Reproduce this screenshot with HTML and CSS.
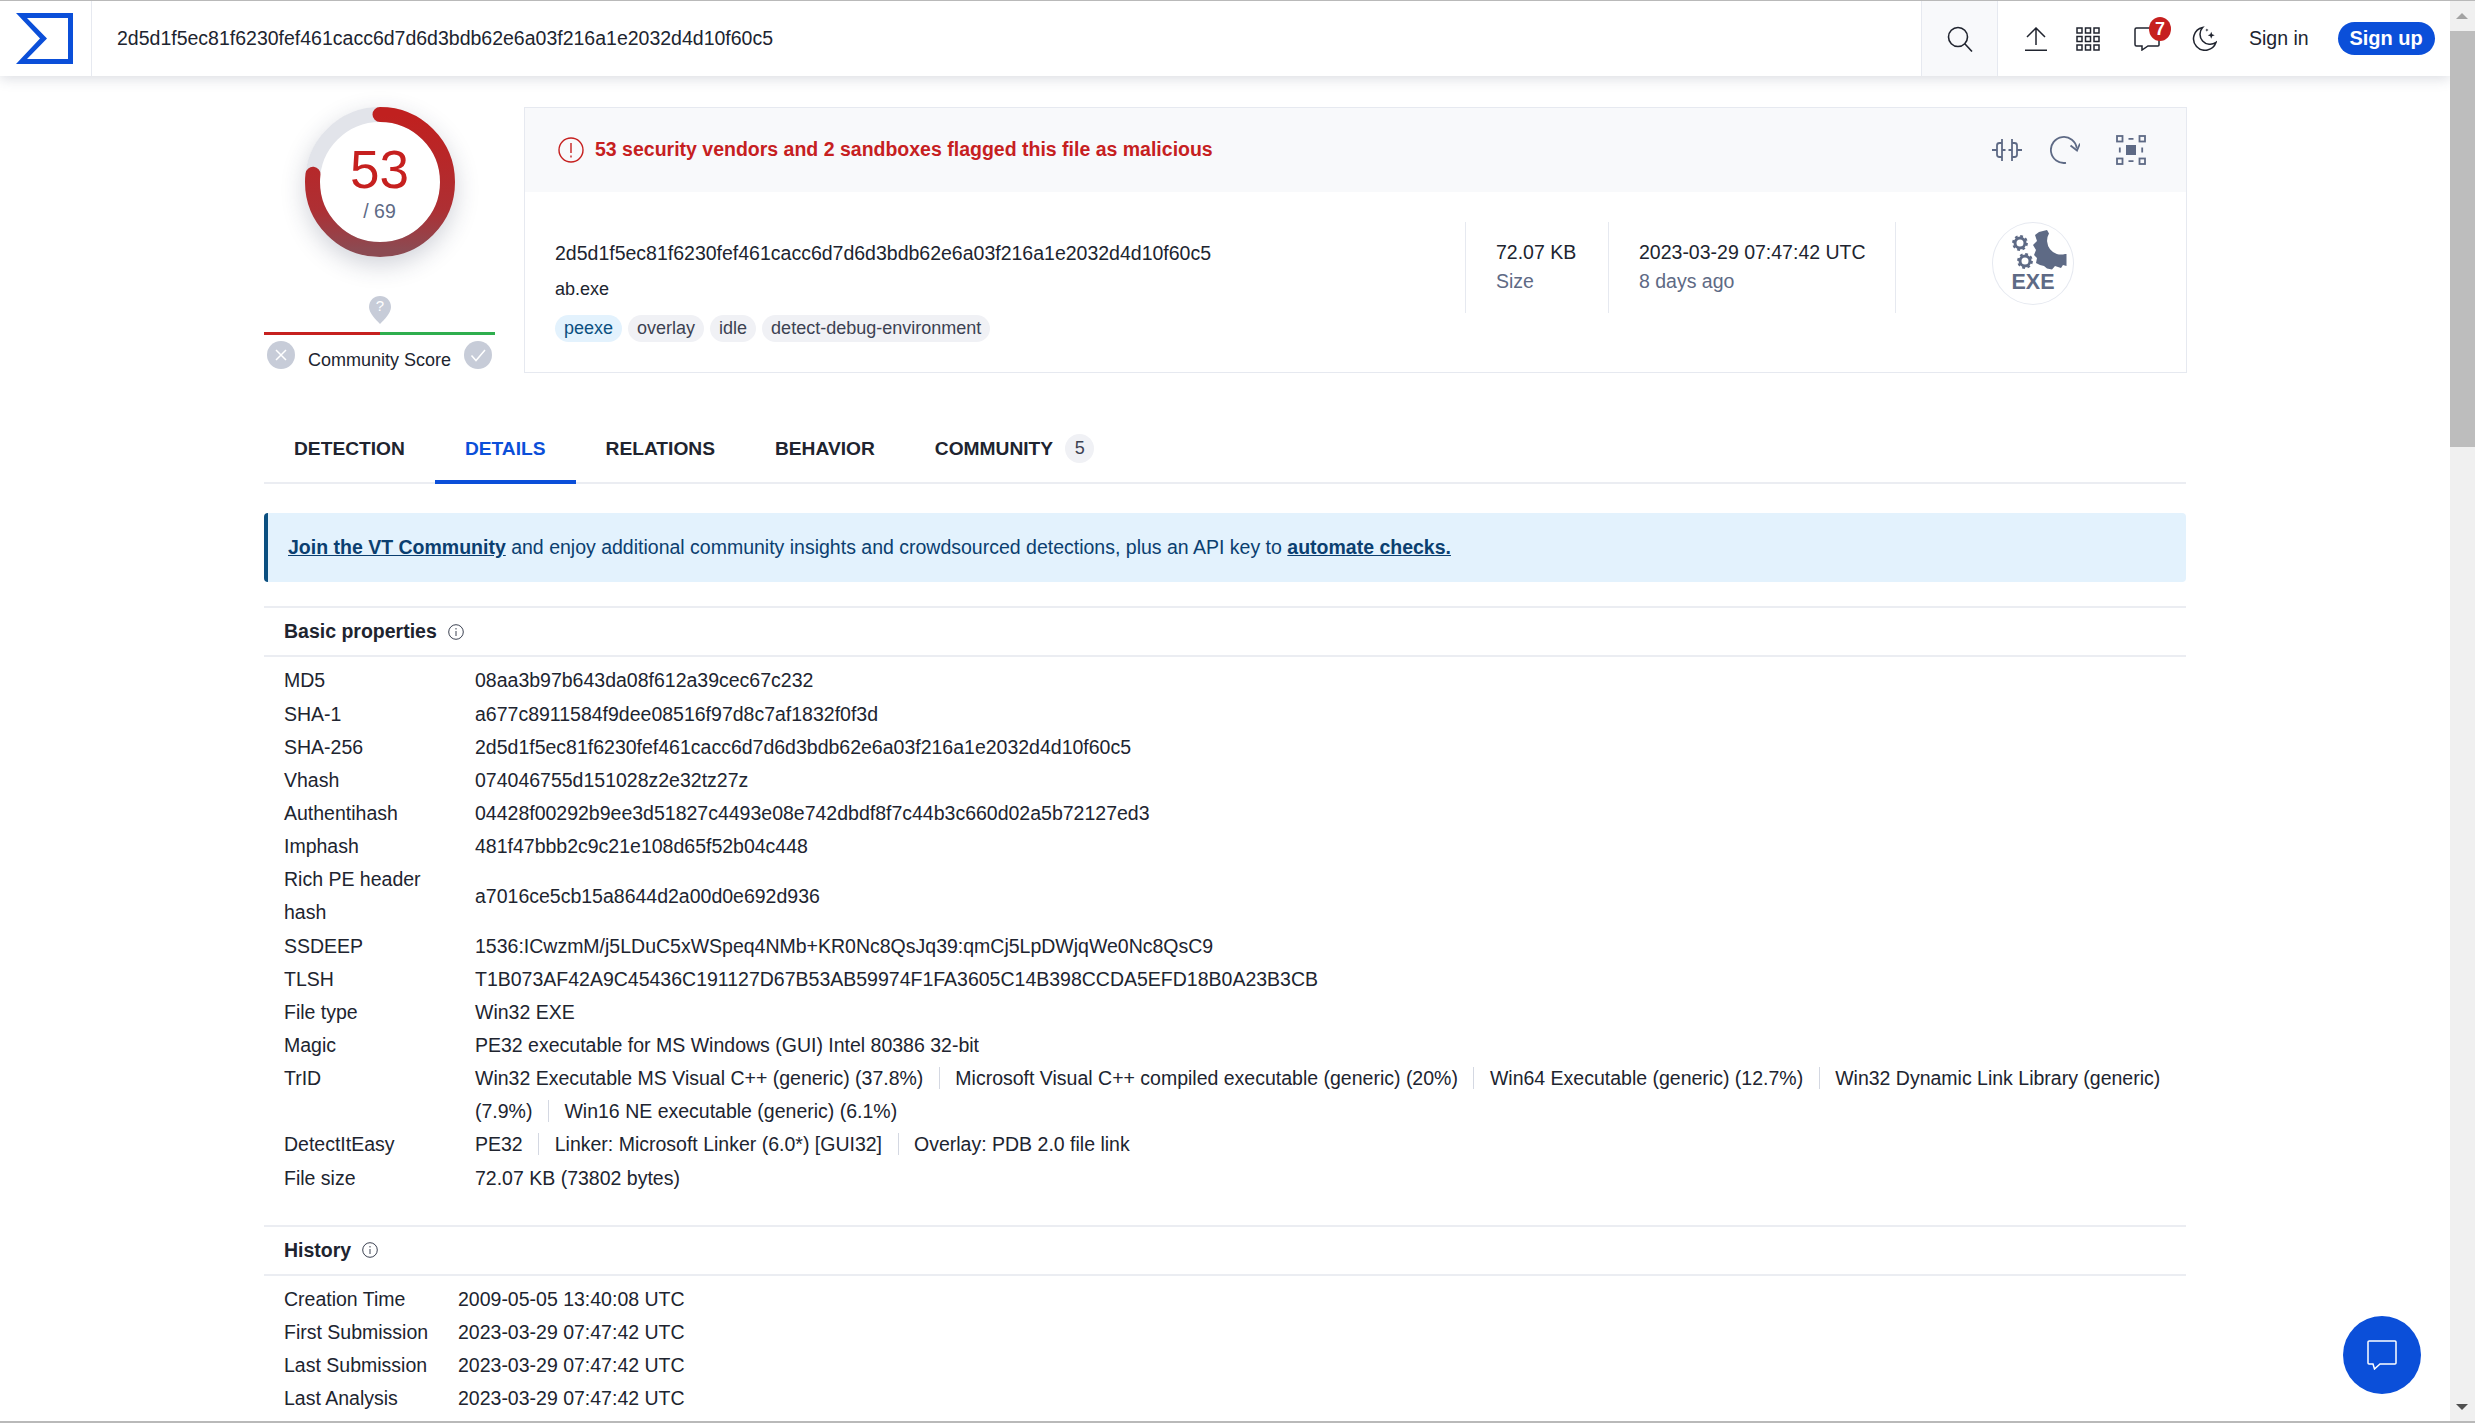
FILE: index.html
```html
<!DOCTYPE html>
<html lang="en">
<head>
<meta charset="utf-8">
<title>VirusTotal - File - 2d5d1f5ec81f6230fef461cacc6d7d6d3bdb62e6a03f216a1e2032d4d10f60c5</title>
<link rel="stylesheet" href="styles.css">
</head>
<body>
<div class="window">
  <div class="viewport">
    <header class="topbar">
      <a class="logo-cell">
        <svg class="logo" viewBox="0 0 57 51"><path fill="#0b4fd9" fill-rule="evenodd" d="M0 0H57V51H0L24 25.5ZM11 5 31 25.5 11 46H52V5Z"/></svg>
      </a>
      <div class="search-text">2d5d1f5ec81f6230fef461cacc6d7d6d3bdb62e6a03f216a1e2032d4d10f60c5</div>
      <div class="search-btn">
        <svg class="ico-26" viewBox="0 0 26 26" fill="none" stroke="#20242f" stroke-width="1.6"><circle cx="11" cy="11" r="9.5"/><path d="M17.8 17.8 25 25.5"/></svg>
      </div>
      <div class="top-actions">
        <svg class="ico-upload" viewBox="0 0 22 24" fill="none" stroke="#20242f" stroke-width="1.5"><path d="M11 18V1M2 10 11 1l9 9M0 23.200h22"/></svg>
        <svg class="ico-grid" viewBox="0 0 24 24" fill="none" stroke="#20242f" stroke-width="1.5"><rect x="1" y="1" width="5" height="5"/><rect x="9.500" y="1" width="5" height="5"/><rect x="18" y="1" width="5" height="5"/><rect x="1" y="9.500" width="5" height="5"/><rect x="9.500" y="9.500" width="5" height="5"/><rect x="18" y="9.500" width="5" height="5"/><rect x="1" y="18" width="5" height="5"/><rect x="9.500" y="18" width="5" height="5"/><rect x="18" y="18" width="5" height="5"/></svg>
        <div class="notify">
          <svg class="ico-chat" viewBox="0 0 26 24" fill="none" stroke="#20242f" stroke-width="1.5"><path d="M2.500 1H23.500Q25 1 25 2.500V18Q25 19 24 19H14L8 23V19H2.500Q1 19 1 17.500V2.500Q1 1 2.500 1Z"/></svg>
          <span class="badge">7</span>
        </div>
        <svg class="ico-moon" viewBox="0 0 26 26" fill="none" stroke="#20242f" stroke-width="1.6"><path d="M11 1.500A12 12 0 1 0 25 17 10.500 10.500 0 0 1 11 1.500Z"/><path fill="#20242f" stroke="none" d="M20 6l1 2.600 2.600 1-2.600 1-1 2.600-1-2.600-2.600-1 2.600-1ZM15.500 2.500l.5 1.200 1.200.5-1.200.5-.5 1.200-.5-1.200-1.200-.5 1.200-.5Z"/></svg>
        <span class="sign-in">Sign in</span>
        <span class="sign-up">Sign up</span>
      </div>
    </header>

    <main class="content">
      <section class="summary">
        <div class="score-col">
          <div class="ring">
            <svg class="ring-svg" viewBox="0 0 150 150">
              <defs>
                <linearGradient id="rg" x1="1" y1="0" x2="0" y2="0"><stop offset="0" stop-color="#c0201f"/><stop offset=".7" stop-color="#ae2f33"/><stop offset="1" stop-color="#8c4a52"/></linearGradient>
              </defs>
              <circle cx="75" cy="75" r="67.500" fill="none" stroke="#e2e4ea" stroke-width="15"/>
              <circle cx="75" cy="75" r="67.500" fill="none" stroke="url(#rg)" stroke-width="15" stroke-linecap="round" stroke-dasharray="325.400 424.100" transform="rotate(-90 75 75)"/>
            </svg>
            <div class="ring-num">53</div>
            <div class="ring-total">/ 69</div>
          </div>
          <svg class="pin" viewBox="0 0 22 28"><path fill="#c7ccd8" d="M11 0C17 0 22 4.500 22 11 22 17 15 24 11 28 7 24 0 17 0 11 0 4.500 5 0 11 0Z"/><text x="11" y="15" class="pin-q">?</text></svg>
          <div class="vote-bar"><span class="vote-red"></span><span class="vote-green"></span></div>
          <div class="vote-row">
            <svg class="vote-ico" viewBox="0 0 28 28"><circle cx="14" cy="14" r="14" fill="#c7ccd8"/><path d="M9 9l10 10M19 9 9 19" stroke="#fff" stroke-width="1.500" fill="none"/></svg>
            <span class="vote-label">Community Score</span>
            <svg class="vote-ico" viewBox="0 0 28 28"><circle cx="14" cy="14" r="14" fill="#c7ccd8"/><path d="M7.500 14.500 12 19.500 21 9" stroke="#fff" stroke-width="1.500" fill="none"/></svg>
          </div>
        </div>

        <div class="card">
          <div class="card-head">
            <div class="alert">
              <svg class="alert-ico" viewBox="0 0 26 26" fill="none" stroke="#c6201f" stroke-width="1.400"><circle cx="13" cy="13" r="12"/><path d="M13 6v10M13 18.500v2"/></svg>
              <span class="alert-text">53 security vendors and 2 sandboxes flagged this file as malicious</span>
            </div>
            <div class="card-actions">
              <svg class="act-compare" viewBox="0 0 30 22" fill="none" stroke="#5e6a85" stroke-width="1.800"><path d="M10 0v22M20 0v22M0 11h4.500M25.500 11H30M10 4H7.500Q5 4 5 6.500V15.500Q5 18 7.500 18H10M20 4H22.500Q25 4 25 6.500V15.500Q25 18 22.500 18H20M10 11h3.500M16.500 11h3.500"/></svg>
              <svg class="act-reload" viewBox="0 0 30 28" fill="none" stroke="#5e6a85" stroke-width="1.800"><path d="M16 26.800A13 13 0 1 1 26.800 12.500"/><path d="M20.500 9.500 27 14.500 30 7.500"/></svg>
              <svg class="act-focus" viewBox="0 0 30 30" fill="none" stroke="#5e6a85" stroke-width="1.800"><rect x="1" y="1" width="5.500" height="5.500"/><rect x="23.500" y="1" width="5.500" height="5.500"/><rect x="1" y="23.500" width="5.500" height="5.500"/><rect x="23.500" y="23.500" width="5.500" height="5.500"/><path d="M12.500 3.800h5M12.500 26.200h5M3.800 12.500v5M26.200 12.500v5"/><rect x="10" y="10" width="10" height="10" fill="#5e6a85" stroke="none"/></svg>
            </div>
          </div>
          <div class="card-body">
            <div class="file-main">
              <div class="file-hash">2d5d1f5ec81f6230fef461cacc6d7d6d3bdb62e6a03f216a1e2032d4d10f60c5</div>
              <div class="file-name">ab.exe</div>
              <div class="tags">
                <span class="tag tag-blue">peexe</span>
                <span class="tag">overlay</span>
                <span class="tag">idle</span>
                <span class="tag">detect-debug-environment</span>
              </div>
            </div>
            <div class="stat stat-size">
              <div class="stat-top">72.07 KB</div>
              <div class="stat-sub">Size</div>
            </div>
            <div class="stat stat-date">
              <div class="stat-top">2023-03-29 07:47:42 UTC</div>
              <div class="stat-sub">8 days ago</div>
            </div>
            <div class="file-type">
              <div class="exe-circle">
                <svg class="exe-gears" viewBox="0 0 60 40">
                  <g fill="none" stroke="#5e6a85">
                    <circle cx="10" cy="13" r="5" stroke-width="3"/>
                    <circle cx="10" cy="13" r="6.900" stroke-width="2" stroke-dasharray="2.800 2.620"/>
                    <circle cx="15" cy="31" r="5" stroke-width="3"/>
                    <circle cx="15" cy="31" r="6.900" stroke-width="2" stroke-dasharray="2.800 2.620"/>
                  </g>
                  <path fill="#5e6a85" d="M25 5 29 2 33 1 37 0 39 3.500A14 14 0 0 0 55 24L56.500 24 56.500 36 53 35 51 38 45 36 42 39.500 37 38.500 34 36 30 35 26 33 27 28 24 25 26 20 23 15 27 11Z"/>
                </svg>
                <span class="exe-label">EXE</span>
              </div>
            </div>
          </div>
        </div>
      </section>

      <nav class="tabs">
        <span class="tab">DETECTION</span>
        <span class="tab tab-active">DETAILS</span>
        <span class="tab">RELATIONS</span>
        <span class="tab">BEHAVIOR</span>
        <span class="tab">COMMUNITY<span class="tab-count">5</span></span>
      </nav>

      <div class="banner"><a class="banner-link">Join the VT Community</a> and enjoy additional community insights and crowdsourced detections, plus an API key to <a class="banner-link">automate checks.</a></div>

      <section class="panel">
        <h3 class="panel-title">Basic properties
          <svg class="info" viewBox="0 0 16 16" fill="none" stroke="#3c4252" stroke-width="1"><circle cx="8" cy="8" r="7.300"/><path d="M8 7v5M8 4v1.500"/></svg>
        </h3>
        <dl class="props">
          <dt>MD5</dt><dd>08aa3b97b643da08f612a39cec67c232</dd>
          <dt>SHA-1</dt><dd>a677c8911584f9dee08516f97d8c7af1832f0f3d</dd>
          <dt>SHA-256</dt><dd>2d5d1f5ec81f6230fef461cacc6d7d6d3bdb62e6a03f216a1e2032d4d10f60c5</dd>
          <dt>Vhash</dt><dd>074046755d151028z2e32tz27z</dd>
          <dt>Authentihash</dt><dd>04428f00292b9ee3d51827c4493e08e742dbdf8f7c44b3c660d02a5b72127ed3</dd>
          <dt>Imphash</dt><dd>481f47bbb2c9c21e108d65f52b04c448</dd>
          <dt>Rich PE header hash</dt><dd class="mid">a7016ce5cb15a8644d2a00d0e692d936</dd>
          <dt>SSDEEP</dt><dd>1536:ICwzmM/j5LDuC5xWSpeq4NMb+KR0Nc8QsJq39:qmCj5LpDWjqWe0Nc8QsC9</dd>
          <dt>TLSH</dt><dd>T1B073AF42A9C45436C191127D67B53AB59974F1FA3605C14B398CCDA5EFD18B0A23B3CB</dd>
          <dt>File type</dt><dd>Win32 EXE</dd>
          <dt>Magic</dt><dd>PE32 executable for MS Windows (GUI) Intel 80386 32-bit</dd>
          <dt>TrID</dt><dd><span class="sep">Win32 Executable MS Visual C++ (generic) (37.8%)</span><span class="sep">Microsoft Visual C++ compiled executable (generic) (20%)</span><span class="sep">Win64 Executable (generic) (12.7%)</span><span>Win32 Dynamic Link Library (generic)</span> <span class="sep">(7.9%)</span><span>Win16 NE executable (generic) (6.1%)</span></dd>
          <dt>DetectItEasy</dt><dd><span class="sep">PE32</span><span class="sep">Linker: Microsoft Linker (6.0*) [GUI32]</span><span>Overlay: PDB 2.0 file link</span></dd>
          <dt>File size</dt><dd>72.07 KB (73802 bytes)</dd>
        </dl>
      </section>

      <section class="panel panel-history">
        <h3 class="panel-title">History
          <svg class="info" viewBox="0 0 16 16" fill="none" stroke="#3c4252" stroke-width="1"><circle cx="8" cy="8" r="7.300"/><path d="M8 7v5M8 4v1.500"/></svg>
        </h3>
        <dl class="props props-history">
          <dt>Creation Time</dt><dd>2009-05-05 13:40:08 UTC</dd>
          <dt>First Submission</dt><dd>2023-03-29 07:47:42 UTC</dd>
          <dt>Last Submission</dt><dd>2023-03-29 07:47:42 UTC</dd>
          <dt>Last Analysis</dt><dd>2023-03-29 07:47:42 UTC</dd>
        </dl>
      </section>
    </main>

    <button class="chat-fab" aria-label="Chat">
      <svg class="chat-ico" viewBox="0 0 30 30" fill="none" stroke="#fff" stroke-width="1.500"><path d="M1.500 1H28Q29 1 29 2V23Q29 24 28 24H13L7.500 29 6 24H2Q1 24 1 23V2Q1 1 2 1Z"/></svg>
    </button>
  </div>
  <div class="scrollbar">
    <div class="sb-up"></div>
    <div class="sb-thumb"></div>
    <div class="sb-track"></div>
    <div class="sb-down"></div>
  </div>
</div>
</body>
</html>
```

FILE: styles.css
```css
* { box-sizing: border-box; }
html, body { margin: 0; padding: 0; height: 100%; overflow: hidden; background: #fff; }
body { font-family: "Liberation Sans", Arial, sans-serif; font-size: 19.5px; color: #20242f; }

.window { display: flex; height: 1423px; border-top: 1px solid #b9b9b9; border-bottom: 2px solid #b9b9b9; }
.viewport { position: relative; width: 2450px; overflow: hidden; }

/* top bar */
.topbar { position: relative; z-index: 2; display: flex; align-items: stretch; height: 75px; background: #fff; box-shadow: 0 3px 12px rgba(60, 70, 100, .18); }
.logo-cell { display: flex; align-items: center; width: 92px; padding-left: 16px; border-right: 1px solid #e6e9f0; }
.logo { width: 57px; height: 51px; }
.search-text { flex: 1; align-self: center; padding-left: 25px; padding-bottom: 1px; }
.search-btn { display: flex; align-items: center; justify-content: center; width: 77px; background: #f8f9fb; border-left: 1px solid #e6e9f0; border-right: 1px solid #e6e9f0; }
.ico-26 { width: 26px; height: 26px; }
.top-actions { display: flex; align-items: center; width: 452px; padding-left: 27px; }
.ico-upload { width: 22px; height: 24px; margin-right: 29px; }
.ico-grid { width: 24px; height: 24px; margin-right: 34px; }
.notify { position: relative; width: 26px; height: 24px; margin-right: 32px; }
.ico-chat { display: block; width: 26px; height: 24px; }
.badge { position: absolute; top: -10px; left: 15px; width: 22px; height: 24px; border-radius: 50%; background: #c6201f; color: #fff; font-size: 18px; font-weight: 700; line-height: 24px; text-align: center; }
.ico-moon { width: 25px; height: 25px; margin-right: 32px; }
.sign-in { margin-right: 29px; }
.sign-up { display: inline-block; width: 97px; height: 33px; border-radius: 17px; background: #0b4fd9; color: #fff; font-size: 20px; font-weight: 700; line-height: 33px; text-align: center; }

/* summary */
.content { width: 1923px; margin-left: 264px; }
.summary { display: flex; gap: 29px; padding-top: 31px; }
.score-col { display: flex; flex-direction: column; align-items: center; width: 231px; }
.ring { position: relative; display: flex; flex-direction: column; align-items: center; width: 150px; height: 150px; border-radius: 50%; background: #fff; box-shadow: 0 8px 24px rgba(40, 50, 80, .22); }
.ring-svg { position: absolute; inset: 0; width: 150px; height: 150px; }
.ring-num { position: relative; margin-top: 35px; color: #c6201f; font-size: 53px; line-height: 56px; }
.ring-total { position: relative; margin-top: 1px; color: #5e6a85; font-size: 19.5px; line-height: 24px; }
.pin { width: 22px; height: 28px; margin-top: 39px; }
.pin-q { fill: #fff; font-size: 15px; text-anchor: middle; }
.vote-bar { display: flex; width: 100%; height: 3px; margin-top: 8px; }
.vote-red { flex: 1; background: #c6201f; }
.vote-green { flex: 1; background: #2fae4e; }
.vote-row { display: flex; align-items: flex-start; justify-content: space-between; width: 100%; padding: 6px 3px 0; }
.vote-ico { flex: none; width: 28px; height: 28px; }
.vote-label { margin-top: 7px; font-size: 18px; line-height: 24px; }

/* card */
.card { flex: 1; height: 266px; border: 1px solid #e6e9f0; }
.card-head { display: flex; align-items: center; justify-content: space-between; height: 84px; padding: 0 40px 0 33px; background: #f8f9fb; }
.alert { display: flex; align-items: center; gap: 11px; color: #c6201f; font-weight: 700; }
.alert-text { margin-bottom: 2px; }
.alert-ico { width: 26px; height: 26px; }
.card-actions { display: flex; align-items: center; }
.act-compare { width: 30px; height: 22px; margin-right: 28px; }
.act-reload { width: 30px; height: 28px; margin-right: 36px; }
.act-focus { width: 30px; height: 30px; }
.card-body { display: flex; align-items: flex-start; padding: 30px 0 0 30px; }
.file-main { width: 910px; height: 91px; padding-top: 16px; }
.file-hash { line-height: 30px; white-space: nowrap; }
.file-name { margin-top: 9px; font-size: 18px; line-height: 24px; }
.tags { display: flex; gap: 6px; margin-top: 14px; }
.tag { display: inline-block; height: 27px; padding: 0 9px; border-radius: 14px; background: #f0f1f5; color: #3c4252; font-size: 18px; line-height: 27px; white-space: nowrap; }
.tag-blue { background: #e3f2fd; color: #0b4f80; }
.stat { height: 91px; padding: 15px 30px 0; border-left: 1px solid #e6e9f0; }
.stat-size { width: 143px; }
.stat-date { width: 288px; border-right: 1px solid #e6e9f0; }
.stat-top { line-height: 30px; white-space: nowrap; }
.stat-sub { color: #5e6a85; line-height: 28px; }
.file-type { flex: 1; display: flex; padding-left: 96px; }
.exe-circle { display: flex; flex-direction: column; align-items: flex-start; width: 82px; height: 83px; border: 1px solid #e6e9f0; border-radius: 50%; }
.exe-gears { width: 60px; height: 40px; margin: 7px 0 0 17px; }
.exe-label { align-self: center; margin-top: 1px; color: #5e6a85; font-size: 21.5px; font-weight: 700; line-height: 22px; }

/* tabs */
.tabs { display: flex; align-items: stretch; height: 69px; margin: 42px 1px 0 0; border-bottom: 2px solid #ebedf2; }
.tab { position: relative; display: flex; align-items: center; height: 69px; padding: 0 30px 2px; font-size: 19.2px; font-weight: 700; }
.tab-active { color: #0b4fd9; border-bottom: 4px solid #0b4fd9; padding-top: 2px; padding-bottom: 0; }
.tab-count { display: inline-block; width: 29px; height: 29px; margin-left: 12px; border-radius: 50%; background: #f0f1f5; color: #3c4252; font-size: 18px; font-weight: 400; line-height: 29px; text-align: center; }

/* banner */
.banner { height: 69px; margin: 29px 1px 0 0; padding-left: 20px; border-left: 4px solid #0b4f80; border-radius: 4px; background: #e3f2fd; color: #0b3f70; line-height: 69px; }
.banner-link { font-weight: 700; text-decoration: underline; }

/* panels */
.panel { margin: 24px 1px 0 0; border-top: 2px solid #ebedf2; }
.panel-history { margin-top: 30px; }
.panel-title { display: flex; align-items: center; gap: 11px; height: 49px; margin: 0; padding-left: 20px; border-bottom: 2px solid #ebedf2; font-size: 19.5px; font-weight: 700; }
.info { width: 16px; height: 16px; }
.props { display: grid; grid-template-columns: 191px 1fr; margin: 7.4px 0 0; padding-left: 20px; line-height: 33.14px; }
.props dt { width: 150px; font-weight: 400; }
.props dd { margin: 0; }
.props dd.mid { align-self: center; }
.props-history { grid-template-columns: 174px 1fr; }
.sep { padding-right: 15.5px; margin-right: 15.5px; border-right: 1px solid #d4d8e2; }

/* chat button */
.chat-fab { position: absolute; left: 2343px; top: 1315px; display: flex; align-items: center; justify-content: center; width: 78px; height: 78px; border: 0; border-radius: 50%; background: #0b4fd9; }
.chat-ico { width: 30px; height: 30px; }

/* scrollbar */
.scrollbar { display: flex; flex-direction: column; width: 25px; background: #f0f0f0; }
.sb-up { position: relative; height: 30px; }
.sb-up::after { content: ""; position: absolute; left: 6px; top: 12px; border-left: 6px solid transparent; border-right: 6px solid transparent; border-bottom: 6px solid #a3a3a3; }
.sb-thumb { height: 416px; background: #bdbdbd; }
.sb-track { flex: 1; }
.sb-down { position: relative; height: 25px; }
.sb-down::after { content: ""; position: absolute; left: 6px; top: 8px; border-left: 6px solid transparent; border-right: 6px solid transparent; border-top: 6px solid #505050; }
```
